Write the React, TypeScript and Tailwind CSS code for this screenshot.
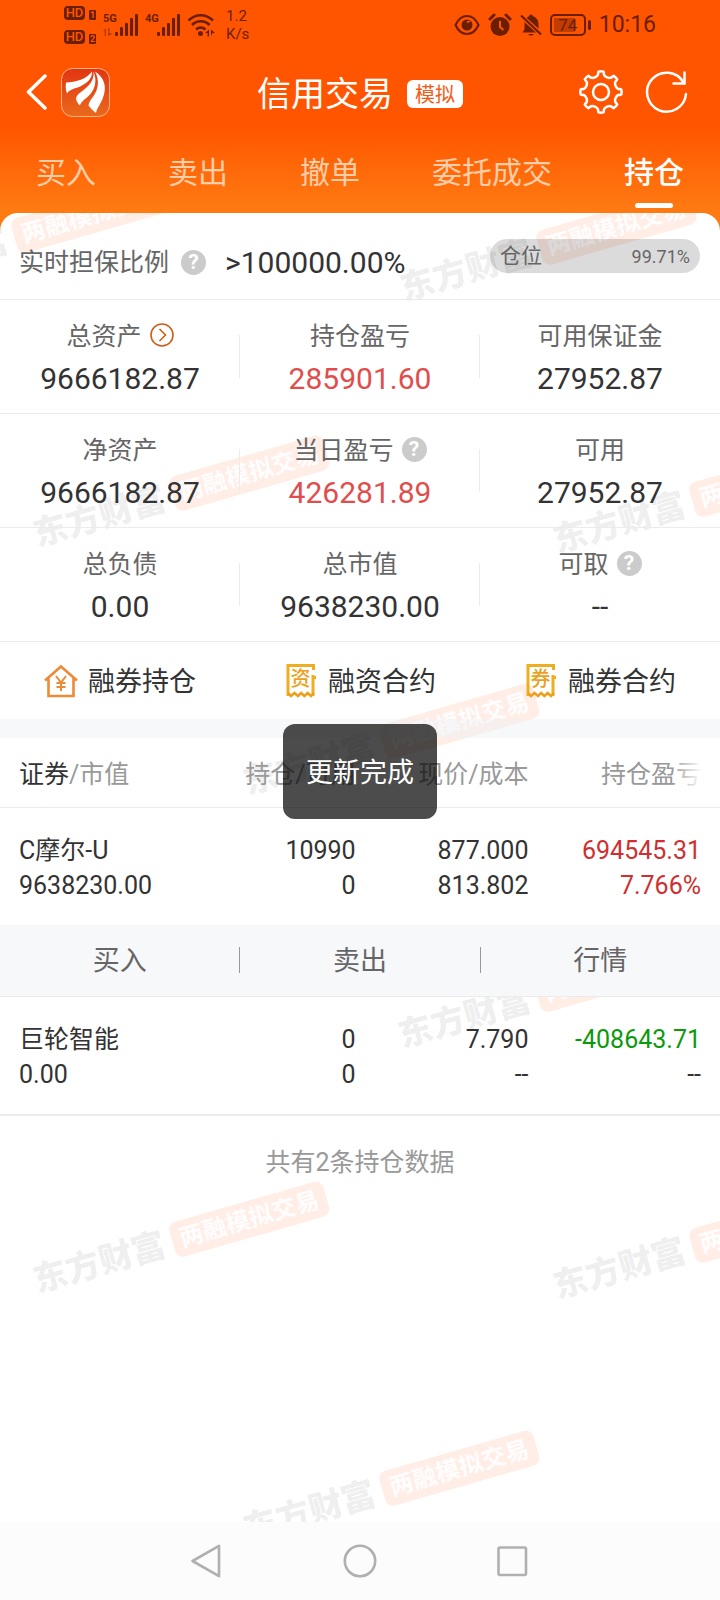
import type { ReactNode } from "react";

const tabs = ["买入", "卖出", "撤单", "委托成交", "持仓"];

type Stat = {
  label: string;
  value: string;
  red?: boolean;
  icon?: "help" | "arrow";
};

const stats: Stat[][] = [
  [
    { label: "总资产", value: "9666182.87", icon: "arrow" },
    { label: "持仓盈亏", value: "285901.60", red: true },
    { label: "可用保证金", value: "27952.87" },
  ],
  [
    { label: "净资产", value: "9666182.87" },
    { label: "当日盈亏", value: "426281.89", red: true, icon: "help" },
    { label: "可用", value: "27952.87" },
  ],
  [
    { label: "总负债", value: "0.00" },
    { label: "总市值", value: "9638230.00" },
    { label: "可取", value: "--", icon: "help" },
  ],
];

const watermarks = [
  "-left-[124px] top-[46px]",
  "left-[401px] top-[58px]",
  "left-[34px] top-[304px]",
  "left-[554px] top-[310px]",
  "left-[244px] top-[552px]",
  "left-[399px] top-[805px]",
  "left-[34px] top-[1050px]",
  "left-[554px] top-[1056px]",
  "left-[244px] top-[1299px]",
];

// Outline of an eight-tooth gear centred on 22,22
function gearPath() {
  const at = (r: number, deg: number) => {
    const a = (deg * Math.PI) / 180;
    return `${(22 + r * Math.cos(a)).toFixed(1)} ${(22 + r * Math.sin(a)).toFixed(1)}`;
  };
  let d = `M${at(20.5, -7)}`;
  for (let i = 0; i < 8; i++) {
    const a = i * 45;
    d += `Q${at(21, a)} ${at(20.5, a + 7)}`;
    d += `Q${at(19.5, a + 9)} ${at(18, a + 9)}`;
    d += `C${at(15.5, a + 13)} ${at(15.5, a + 32)} ${at(18, a + 36)}`;
    d += `Q${at(19.5, a + 36)} ${at(20.5, a + 38)}`;
  }
  return d + "Z";
}

function HdBadge({ sim }: { sim: string }) {
  return (
    <div className="flex items-end gap-1">
      <span className="w-[21px] rounded-sm bg-[#6b1e00] text-center text-[13px] leading-[14px] font-medium text-[#ff5500]">
        HD
      </span>
      <span className="w-[7px] rounded-[1px] bg-[#6b1e00] text-center text-[9px] leading-[10px] font-bold text-[#ff5500]">
        {sim}
      </span>
    </div>
  );
}

function Signal({ label, data }: { label: string; data?: boolean }) {
  return (
    <div className="relative h-6 w-9">
      <span className="absolute top-0 left-0 text-[11px] leading-3 font-bold">{label}</span>
      <svg viewBox="0 0 36 24" className="h-6 w-9" fill="currentColor">
        <rect x="12" y="19" width="3" height="4" rx="1" />
        <rect x="17" y="14" width="3" height="9" rx="1" />
        <rect x="22" y="10" width="3" height="13" rx="1" />
        <rect x="27" y="5" width="3" height="18" rx="1" />
        <rect x="32" y="1" width="3" height="22" rx="1" />
        {data && <path d="M0 18l3-3v8H1.500v-5zM5 15h1.500v5H10l-4 3H5z" opacity=".45" />}
      </svg>
    </div>
  );
}

function StatusBar() {
  return (
    <div className="flex h-12 items-center pt-0.5 pr-16 pl-16 text-[#6b1e00]">
      <div className="flex flex-col gap-2.5">
        <HdBadge sim="1" />
        <HdBadge sim="2" />
      </div>
      <div className="ml-[7px] flex items-center gap-1.5">
        <Signal label="5G" data />
        <Signal label="4G" />
        <svg viewBox="0 0 28 24" className="h-6 w-7" fill="none" stroke="currentColor" strokeWidth="2.600">
          <path d="M1.500 7.500c7-7 17.500-7 24.500 0M5 12c5-5 12.500-5 17.500 0M9 16.500c3-2.500 6.500-2.500 9.500 0" />
          <circle cx="13.500" cy="20.500" r="2.500" fill="currentColor" stroke="none" />
          <path d="M18 20l4-3.500v7h-1.500V20zM24 16.500l4 3.500h-2.500l-1.500 3z" fill="currentColor" stroke="none" />
        </svg>
      </div>
      <div className="ml-[11px] text-[15px] leading-[18px]">
        <div>1.2</div>
        <div>K/s</div>
      </div>

      <div className="ml-auto flex items-center gap-2">
        <svg viewBox="0 0 26 22" className="h-[22px] w-[26px]" fill="none" stroke="currentColor" strokeWidth="2.200">
          <path d="M1.500 11C7-1 19-1 24.500 11 19 23 7 23 1.500 11z" />
          <circle cx="13" cy="11" r="5.500" fill="currentColor" stroke="none" />
          <path d="M13 8.500a3 3 0 0 1 3-1" stroke="#ff5500" strokeWidth="1.500" />
        </svg>
        <svg viewBox="0 0 24 24" className="size-6" fill="currentColor">
          <circle cx="12" cy="13.500" r="9.500" />
          <path d="M2 6l4-4M22 6l-4-4" stroke="currentColor" strokeWidth="3" strokeLinecap="round" />
          <path d="M12 8v6l3.500 3" fill="none" stroke="#ff5500" strokeWidth="2" />
        </svg>
        <svg viewBox="0 0 22 24" className="h-6 w-[22px]" fill="currentColor">
          <path d="M11 1.500c1.200 0 1.800.8 1.800 1.800C17 4.500 18.500 8 18.500 11v5l2 3.500H2.500l2-3.500v-5c0-3 1.500-6.500 4.700-7.700 0-1 .6-1.800 1.800-1.800zM8.500 21h5c-.5 2-4.500 2-5 0z" />
          <path d="M0 2l21 19" stroke="#ff5500" strokeWidth="4.500" />
          <path d="M1 2.500l20 19" stroke="currentColor" strokeWidth="2.200" />
        </svg>
        <div className="flex items-center">
          <div className="relative h-[22px] w-9 rounded-[5px] border-2 border-[#6b1e00] p-0.5">
            <div className="h-full w-[21px] rounded-[1px] bg-[#c23c00]" />
            <span className="absolute inset-0 text-center text-[17px] leading-[18px]">74</span>
          </div>
          <div className="ml-0.5 h-[10px] w-[3px] rounded-xs bg-[#6b1e00]" />
        </div>
        <span className="text-[23px] leading-6">10:16</span>
      </div>
    </div>
  );
}

function Header() {
  return (
    <header className="bg-linear-to-b from-[#ff5500] from-60% to-[#ff7b12] text-white">
      <StatusBar />
      <div className="grid h-[88px] grid-cols-[1fr_auto_1fr] items-center">
        <div className="flex items-center gap-3.5 pl-[25px]">
          <button type="button" aria-label="返回">
            <svg viewBox="0 0 22 36" className="h-9 w-[22px]" fill="none" stroke="currentColor" strokeWidth="3.500" strokeLinecap="round" strokeLinejoin="round">
              <path d="M20 2L3.500 18 20 34" />
            </svg>
          </button>
          <a href="#home" aria-label="东方财富">
            <svg viewBox="0 0 49 49" className="size-[49px]">
              <defs>
                <linearGradient id="logo" x1="0" y1="0" x2="0" y2="1">
                  <stop offset="0" stopColor="#e23512" />
                  <stop offset="1" stopColor="#ea6a1c" />
                </linearGradient>
              </defs>
              <rect x=".5" y=".5" width="48" height="48" rx="11" fill="url(#logo)" stroke="#ffb58a" />
              <g fill="#fff">
                <path d="M5 14.500C15 14 26 11 31 3.500 31.500 11 25 16 18 19 12 21 8 22 6 25.500 4.500 22 4.500 18 5 14.500z" />
                <path d="M32.500 3.500C33.500 13 27 19 20 24 17 26 15.500 28 15 30.500 15.500 33.500 17 36 19 37.500 20 33.500 24 31.500 28 27.500 34 21.500 36.500 13 32.500 3.500z" />
                <path d="M34 3.500C39 13 37 22 32.500 28 29.500 32 28 34 27.500 37.500 29.500 40 32 43 35 45 36 40 39 37 41.500 31 44 25 44.500 19 43 14.500 41.500 10 38.500 6.500 34 3.500z" />
              </g>
            </svg>
          </a>
        </div>
        <div className="flex items-center gap-3.5 pt-1">
          <h1 className="text-[34px] leading-10">信用交易</h1>
          <span className="h-7 rounded-md bg-white px-2 text-[20px] leading-[31px] text-[#f05a14]">模拟</span>
        </div>
        <div className="flex items-center justify-end gap-[22px] pr-[31px]">
          <button type="button" aria-label="设置">
            <svg viewBox="0 0 44 44" className="size-11" fill="none" stroke="currentColor" strokeWidth="2.500" strokeLinejoin="round">
              <path d={gearPath()} />
              <circle cx="22" cy="22" r="8" />
            </svg>
          </button>
          <button type="button" aria-label="刷新">
            <svg viewBox="0 0 44 44" className="size-11" fill="none" stroke="currentColor" strokeWidth="2.500" strokeLinecap="round">
              <path d="M41 24A19.500 19.500 0 1 1 38.500 12.500" />
              <path d="M39.500 2.500v11H28.500" />
            </svg>
          </button>
        </div>
      </div>
      <nav className="flex justify-between px-9 pt-[21px] pb-[5px]">
        {tabs.map((tab) => {
          const active = tab === "持仓";
          return (
            <button key={tab} type="button" className="flex flex-col items-center gap-3.5">
              <span className={active ? "text-[30px] leading-8 font-medium" : "text-[30px] leading-8 text-[#ffcda8]"}>
                {tab}
              </span>
              <span className={active ? "h-[5px] w-[38px] rounded-full bg-white" : "h-[5px]"} />
            </button>
          );
        })}
      </nav>
    </header>
  );
}

function HelpButton() {
  return (
    <button
      type="button"
      aria-label="说明"
      className="size-[25px] shrink-0 rounded-full bg-[#cbcbcb] text-center text-[21px] leading-[25px] font-bold text-white"
    >
      ?
    </button>
  );
}

function StatCell({ stat }: { stat: Stat }) {
  return (
    <div className="flex flex-1 flex-col items-center pt-[19px] pb-3.5">
      <div className="flex h-8 items-center gap-2 text-[25px] text-[#666]">
        <span className="pt-1">{stat.label}</span>
        {stat.icon === "help" && <HelpButton />}
        {stat.icon === "arrow" && (
          <button type="button" aria-label="资产详情">
            <svg viewBox="0 0 24 24" className="size-6" fill="none" stroke="#cc5f1a" strokeWidth="1.600">
              <circle cx="12" cy="12" r="11" />
              <path d="M9.500 6l6 6-6 6" />
            </svg>
          </button>
        )}
      </div>
      <div className={stat.red ? "mt-2 text-[30px] leading-10 text-[#e14d4d]" : "mt-2 text-[30px] leading-10"}>
        {stat.value}
      </div>
    </div>
  );
}

function HouseIcon() {
  return (
    <svg viewBox="0 0 34 34" className="size-[34px]" fill="none" stroke="#ee8a35" strokeWidth="2.600">
      <path d="M1 16.500L17 2.500l16 14M4.500 14v18h25V14" />
      <path d="M12 12l5 6.500 5-6.500M17 18.500V27M12.500 19h9M12.500 23h9" strokeWidth="2" />
    </svg>
  );
}

function ReceiptIcon({ char }: { char: string }) {
  return (
    <svg viewBox="0 0 34 34" className="size-[34px]" fill="none" stroke="#efae22" strokeWidth="3">
      <path d="M4 32V1.500h25.500V6M2.500 1.500H31M29 11v21M27.500 13.500h4.500" />
      <path d="M4 29l3 3 3.500-3 3.500 3 3.200-3 3.200 3 3.300-3 3.300 3 3-3" stroke="#eca01d" strokeWidth="2.600" />
      <text x="16.500" y="22" textAnchor="middle" fontSize="20" fontWeight="500" fill="#eca01d" stroke="none">
        {char}
      </text>
    </svg>
  );
}

function QuickLink({ icon, children }: { icon: ReactNode; children: ReactNode }) {
  return (
    <a href="#contract" className="flex flex-1 items-center justify-center gap-2.5 text-[27px]">
      {icon}
      <span className="pt-1">{children}</span>
    </a>
  );
}

function Holding({ cells, className }: { cells: [string, string][]; className: string }) {
  return (
    <tr className="leading-[35px]">
      {cells.map(([top, bottom], i) => (
        <td
          key={i}
          className={
            i === 0
              ? "pt-[25px] pb-[22px] pl-[19px] text-left"
              : i === 3
                ? `pt-[25px] pb-[22px] pr-[19px] text-right ${className}`
                : "pt-[25px] pb-[22px] text-right"
          }
        >
          <div>{top}</div>
          <div className={bottom === "--" ? "text-[#333]" : ""}>{bottom}</div>
        </td>
      ))}
    </tr>
  );
}

function Holdings() {
  return (
    <table className="w-full table-fixed border-collapse text-[25px] text-[#333]">
      <colgroup>
        <col className="w-[25%]" />
        <col className="w-[24.400%]" />
        <col className="w-[24%]" />
        <col />
      </colgroup>
      <thead>
        <tr className="h-[69px] border-b border-[#ebebeb] text-[#999]">
          <th className="pt-1 pl-[19px] text-left font-normal">
            <span className="text-[#333]">证券</span>/市值
          </th>
          <th className="pt-1 text-right font-normal">持仓/可用</th>
          <th className="pt-1 text-right font-normal">现价/成本</th>
          <th className="relative pt-1 pr-[19px] text-right font-normal whitespace-nowrap">
            持仓盈亏
            <div className="absolute inset-y-0 right-0 w-12 bg-linear-to-r from-white/0 via-white/80 to-white" />
          </th>
        </tr>
      </thead>
      <tbody>
        <Holding
          className="text-[#cf2f2f]"
          cells={[
            ["C摩尔-U", "9638230.00"],
            ["10990", "0"],
            ["877.000", "813.802"],
            ["694545.31", "7.766%"],
          ]}
        />
        <tr className="border-b border-[#ebebeb] bg-[#f7f8fa]">
          <td colSpan={4} className="h-[72px]">
            <div className="flex items-center divide-x divide-[#999] text-[27px] leading-6 text-[#666]">
              <button type="button" className="flex-1 pt-0.5">买入</button>
              <button type="button" className="flex-1 pt-0.5">卖出</button>
              <button type="button" className="flex-1 pt-0.5">行情</button>
            </div>
          </td>
        </tr>
        <Holding
          className="text-[#0c9a0c]"
          cells={[
            ["巨轮智能", "0.00"],
            ["0", "0"],
            ["7.790", "--"],
            ["-408643.71", "--"],
          ]}
        />
      </tbody>
    </table>
  );
}

function Watermarks() {
  return (
    <div aria-hidden="true" className="pointer-events-none absolute inset-0 -z-10 overflow-hidden">
      {watermarks.map((position) => (
        <div
          key={position}
          className={`absolute flex h-9 origin-left -rotate-16 items-center gap-2 whitespace-nowrap ${position}`}
        >
          <span className="text-[34px] leading-9 font-black text-black/8">东方财富</span>
          <span className="rounded-lg bg-[#ff5a1e]/11 px-2 text-[24px] leading-9 font-bold text-white/90">
            两融模拟交易
          </span>
        </div>
      ))}
    </div>
  );
}

function SystemNav() {
  return (
    <nav className="flex h-[78px] items-center justify-center gap-[119px] bg-[#fcfcfc] text-[#b0b0b0]">
      <button type="button" aria-label="后退">
        <svg viewBox="0 0 34 34" className="size-[34px]" fill="none" stroke="currentColor" strokeWidth="2.600" strokeLinejoin="round">
          <path d="M2.500 17L29 1.800v30.400z" />
        </svg>
      </button>
      <button type="button" aria-label="主屏幕">
        <svg viewBox="0 0 34 34" className="size-[34px]" fill="none" stroke="currentColor" strokeWidth="2.600">
          <circle cx="17" cy="17" r="15.200" />
        </svg>
      </button>
      <button type="button" aria-label="最近任务">
        <svg viewBox="0 0 34 34" className="size-[34px]" fill="none" stroke="currentColor" strokeWidth="2.600">
          <rect x="2.500" y="3.500" width="27.500" height="27.500" rx="1.500" />
        </svg>
      </button>
    </nav>
  );
}

export default function App() {
  return (
    <div className="flex min-h-screen flex-col bg-white font-[Roboto,'Noto_Sans_CJK_SC',sans-serif] text-[#333]">
      <Header />
      <div className="flex flex-1 flex-col bg-linear-to-b from-[#ff7b12] from-5% to-white to-5%">
        <main className="relative isolate flex-1 overflow-hidden rounded-t-[18px] bg-white">
          <Watermarks />
          <section className="flex h-[86px] items-center justify-between pr-5 pl-[19px]">
            <div className="flex items-center pt-3">
              <span className="pt-0.5 text-[25px] text-[#666]">实时担保比例</span>
              <span className="mr-[19px] ml-3 flex">
                <HelpButton />
              </span>
              <span className="text-[30px]">&gt;100000.00%</span>
            </div>
            <div className="flex h-[34px] w-[210px] items-center justify-between rounded-full bg-black/14 px-2.5 text-[#666]">
              <span className="pt-0.5 text-[21px]">仓位</span>
              <span className="text-[18px]">99.71%</span>
            </div>
          </section>

          {stats.map((row, i) => (
            <section key={i} className="flex items-center border-t border-[#ebebeb]">
              {row.map((stat, j) => (
                <div key={stat.label} className="flex flex-1 items-center">
                  {j > 0 && <div className="-ml-px h-[43px] w-px bg-[#ebebeb]" />}
                  <StatCell stat={stat} />
                </div>
              ))}
            </section>
          ))}

          <section className="flex h-[78px] border-t border-[#ebebeb]">
            <QuickLink icon={<HouseIcon />}>融券持仓</QuickLink>
            <QuickLink icon={<ReceiptIcon char="资" />}>融资合约</QuickLink>
            <QuickLink icon={<ReceiptIcon char="券" />}>融券合约</QuickLink>
          </section>
          <div className="h-[19px] bg-[#eff1f5]/50" />

          <Holdings />
          <p className="border-t-2 border-[#ebebeb] pt-7 text-center text-[25px] text-[#999]">共有2条持仓数据</p>

          <div
            role="status"
            className="absolute top-[511px] left-1/2 -translate-x-1/2 rounded-xl bg-black/70 px-[23px] pt-8 pb-7 text-[27px] leading-[35px] whitespace-nowrap text-white"
          >
            更新完成
          </div>
        </main>
      </div>
      <SystemNav />
    </div>
  );
}
